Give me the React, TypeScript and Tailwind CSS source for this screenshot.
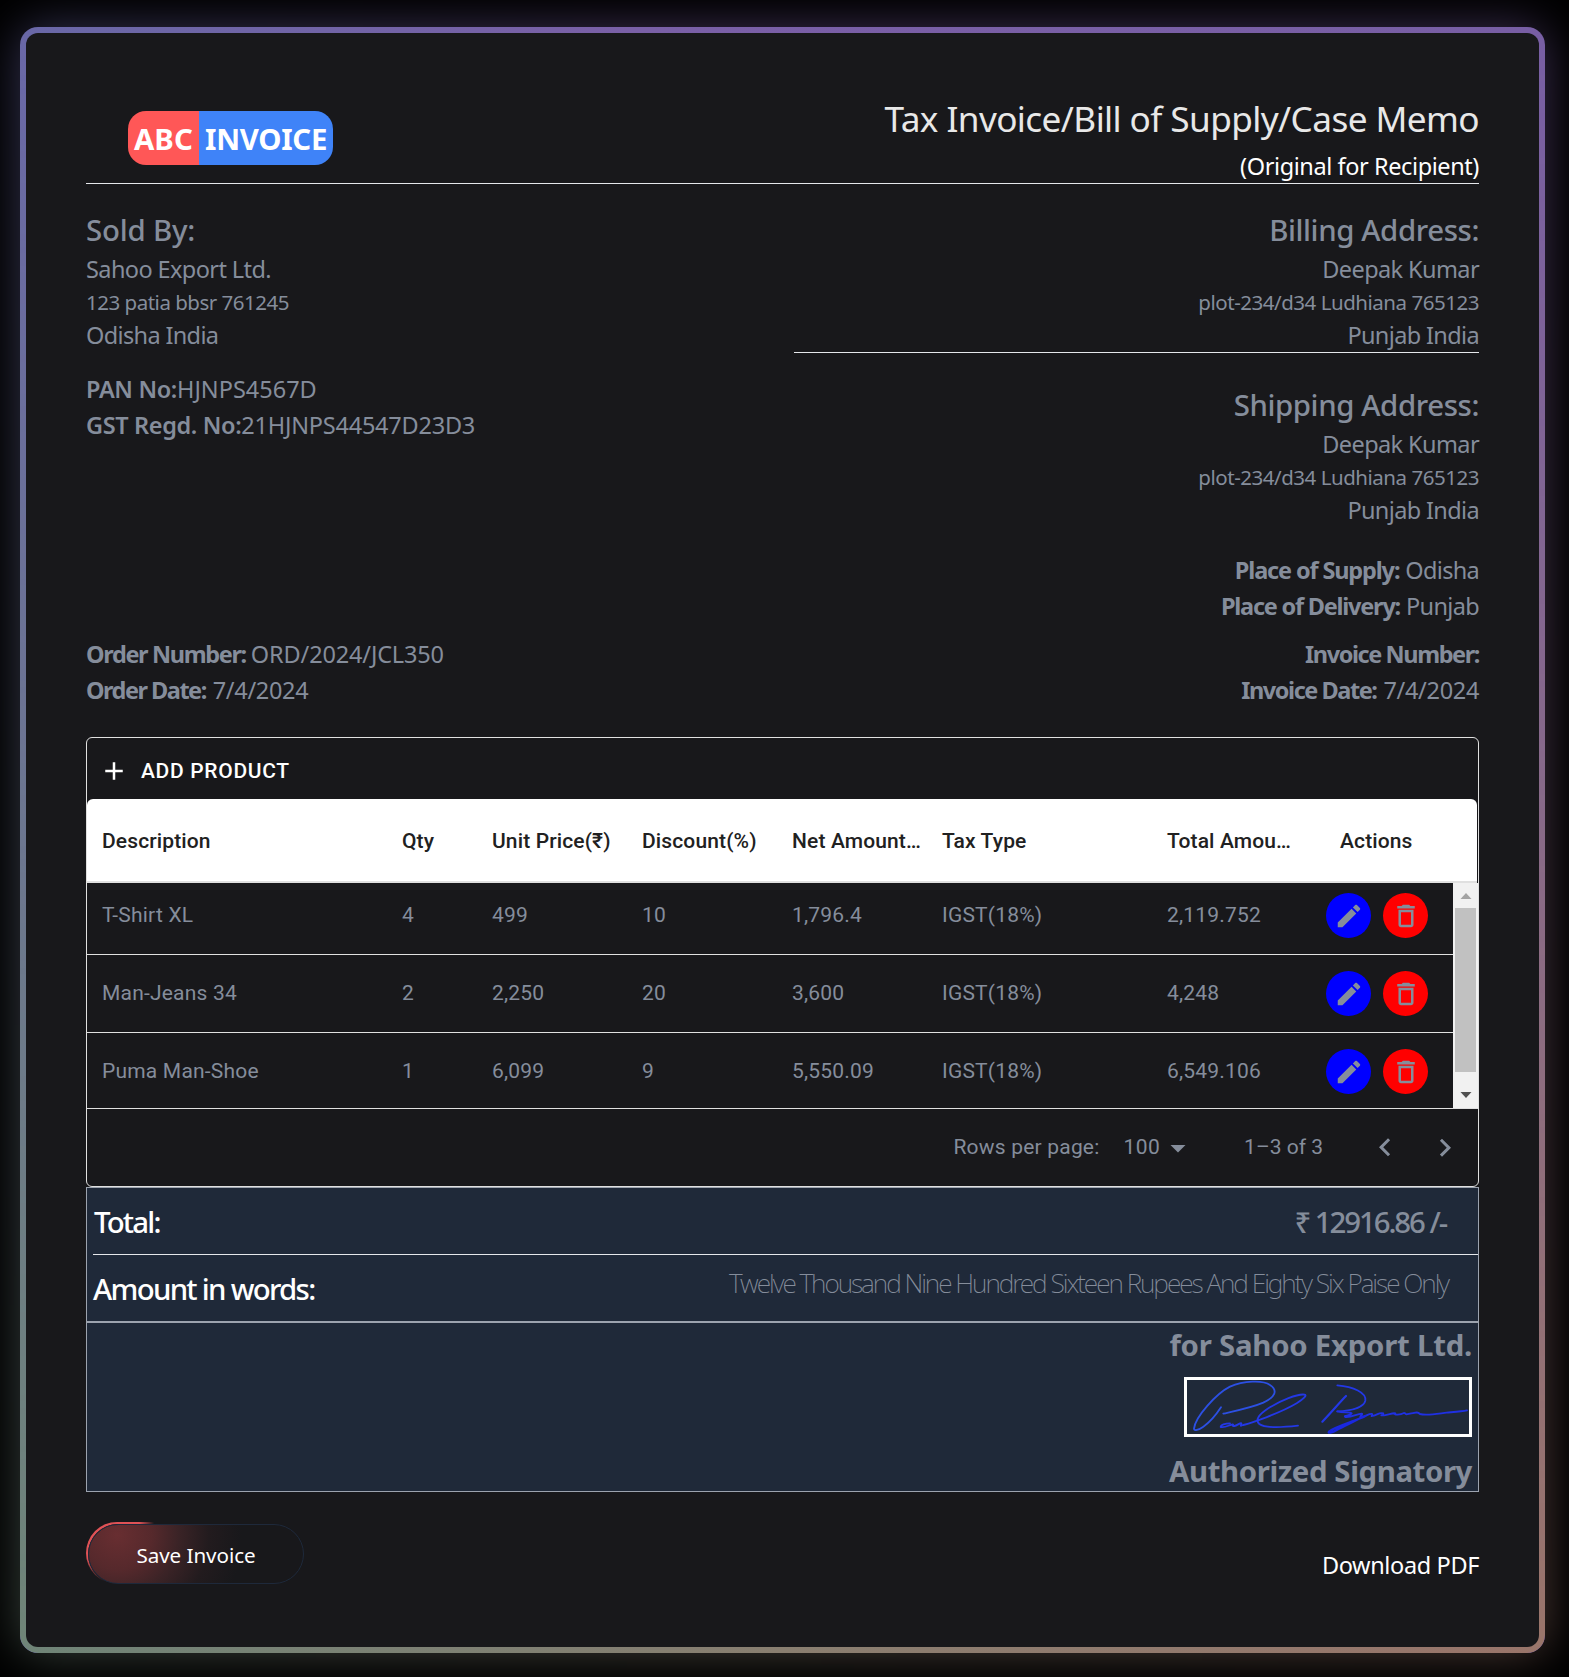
import type { ReactNode } from "react";

const products = [
  { name: "T-Shirt XL", qty: "4", price: "499", discount: "10", net: "1,796.4", tax: "IGST(18%)", total: "2,119.752" },
  { name: "Man-Jeans 34", qty: "2", price: "2,250", discount: "20", net: "3,600", tax: "IGST(18%)", total: "4,248" },
  { name: "Puma Man-Shoe", qty: "1", price: "6,099", discount: "9", net: "5,550.09", tax: "IGST(18%)", total: "6,549.106" },
];

const columns = "grid grid-cols-[300px_90px_150px_150px_150px_225px_150px_1fr] items-center";

function Icon({ d, className }: { d: string; className: string }) {
  return (
    <svg viewBox="0 0 24 24" fill="currentColor" className={className}>
      <path d={d} />
    </svg>
  );
}

function GradientFill() {
  return (
    <>
      <div className="absolute inset-0 rounded-[18px] bg-[linear-gradient(to_right,#6a68a8,#7a60a8_40%,#785fa5)]" />
      <div className="absolute inset-0 rounded-[18px] bg-[linear-gradient(to_right,#6f8577,#8a7f70_50%,#9a756a)] [mask-image:linear-gradient(to_bottom,transparent,black)]" />
    </>
  );
}

function Address({ title }: { title: string }) {
  return (
    <>
      <h2 className="pt-[2px] text-[29.4px] leading-[42px] font-medium tracking-[-0.4px]">{title}</h2>
      <p className="text-[23.5px] leading-[36px] tracking-[-0.6px]">Deepak Kumar</p>
      <p className="text-[20.5px] leading-[30px] tracking-[-0.47px]">plot-234/d34 Ludhiana 765123</p>
      <p className="h-[35px] text-[23.5px] leading-[37px] tracking-[-0.64px]">Punjab India</p>
    </>
  );
}

function Cell({ children }: { children: ReactNode }) {
  return <div className="truncate pl-[15px]">{children}</div>;
}

function Signature() {
  return (
    <svg viewBox="21 30 846 162" className="h-[54px] w-[282px]" fill="none" stroke="#2338e6" strokeWidth="5.5" strokeLinecap="round" strokeLinejoin="round">
      <path stroke="#2c50e4" d="M123 112C108 135 88 158 70 170C56 180 42 184 42 176C46 140 110 70 150 50C190 32 250 30 270 45C295 62 285 82 250 98C215 113 170 122 130 131" />
      <path d="M150 160C135 160 122 165 122 171C135 174 148 165 158 163C162 163 155 170 163 168C172 166 180 158 184 160C186 166 176 170 190 165C215 158 300 130 350 100C370 87 382 76 374 74C355 70 300 92 265 115C235 135 225 150 238 162C255 175 310 172 354 167" />
      <path d="M472 46C520 50 560 68 556 92C552 112 515 122 472 124" />
      <path strokeWidth="6.5" d="M498 78C480 96 455 126 427 155" />
      <path stroke="#1f30e4" d="M472 124C490 130 510 124 515 130C512 138 488 136 496 141C515 143 530 132 545 131C552 133 532 142 546 141C560 139 566 130 576 132C582 136 566 140 582 137C592 134 600 126 610 130C612 136 594 137 612 136C628 134 636 128 646 130C640 137 662 134 672 129C684 131 668 135 690 131C706 128 712 124 720 132C740 138 780 130 800 128C820 126 845 124 861 121" />
      <path stroke="#1a28e0" strokeWidth="6.5" d="M556 138C530 152 470 168 448 184C440 192 458 188 470 180C500 164 530 152 548 140M470 174C490 164 515 154 530 150" />
    </svg>
  );
}

export default function App() {
  return (
    <div className="h-[1677px] w-[1569px] overflow-hidden bg-black pt-[27px] pl-[20px] font-['Noto_Sans','Open_Sans',sans-serif] text-[#858d9b]">
      <div className="relative h-[1626px] w-[1525px] p-[6px]">
        <div className="absolute inset-0 opacity-50 blur-xl">
          <GradientFill />
        </div>
        <GradientFill />

        <main className="relative h-full rounded-[12px] bg-[#18181b] px-[60px] pt-[58px]">
          <header className="flex h-[93px] justify-between border-b border-gray-200">
            <div className="mt-[20px] ml-[42px] flex h-[54px] w-[205px] overflow-hidden rounded-[18px] text-[29.4px] leading-[57px] font-bold text-white">
              <span className="w-[71px] bg-[#ff5757] pl-[6px]">ABC</span>
              <span className="flex-1 bg-[#3f83f8] pl-[6px] tracking-[-0.3px]">INVOICE</span>
            </div>
            <div className="text-right">
              <h1 className="text-[35.2px] leading-[55px] tracking-[-0.6px] text-[#e8e8e8]">Tax Invoice/Bill of Supply/Case Memo</h1>
              <p className="pt-[3px] text-[23.5px] leading-[34px] tracking-[-0.41px] text-white">(Original for Recipient)</p>
            </div>
          </header>

          <section className="flex justify-between pt-[23px]">
            <div>
              <h2 className="pt-[2px] text-[29.4px] leading-[42px] font-medium tracking-[-0.2px]">Sold By:</h2>
              <p className="text-[23.5px] leading-[36px] tracking-[-0.6px]">Sahoo Export Ltd.</p>
              <p className="text-[20.5px] leading-[30px] tracking-[-0.49px]">123 patia bbsr 761245</p>
              <p className="text-[23.5px] leading-[36px] tracking-[-0.65px]">Odisha India</p>
              <div className="pt-[18px] text-[23.5px] leading-[36px]">
                <p>
                  <b className="font-semibold tracking-[-0.35px]">PAN No:</b>
                  <span>HJNPS4567D</span>
                </p>
                <p>
                  <b className="font-semibold tracking-[-0.36px]">GST Regd. No:</b>
                  <span className="tracking-[-0.22px]">21HJNPS44547D23D3</span>
                </p>
              </div>
            </div>
            <div className="w-[685px] text-right">
              <div className="border-b border-gray-200">
                <Address title="Billing Address:" />
              </div>
              <div className="pt-[29px]">
                <Address title="Shipping Address:" />
              </div>
              <div className="pt-[25px] text-[23.5px] leading-[36px]">
                <p>
                  <b className="mr-[6px] font-bold tracking-[-1.14px]">Place of Supply:</b>
                  <span className="tracking-[-0.7px]">Odisha</span>
                </p>
                <p>
                  <b className="mr-[6px] font-bold tracking-[-1.22px]">Place of Delivery:</b>
                  <span className="tracking-[-0.66px]">Punjab</span>
                </p>
              </div>
            </div>
          </section>

          <section className="flex justify-between pt-[12px] text-[23.5px] leading-[36px]">
            <div>
              <p>
                <b className="mr-[5px] font-bold tracking-[-1.35px]">Order Number:</b>
                <span className="tracking-[-0.15px]">ORD/2024/JCL350</span>
              </p>
              <p>
                <b className="mr-[7px] font-bold tracking-[-1.5px]">Order Date:</b>
                <span className="tracking-[-0.32px]">7/4/2024</span>
              </p>
            </div>
            <div className="text-right">
              <p>
                <b className="font-bold tracking-[-1.41px]">Invoice Number:</b>
              </p>
              <p>
                <b className="mr-[7px] font-bold tracking-[-1.45px]">Invoice Date:</b>
                <span className="tracking-[-0.32px]">7/4/2024</span>
              </p>
            </div>
          </section>

          <section className="mt-[29px] h-[450px] overflow-hidden rounded-[6px] border border-[#e0e0e0] font-[Roboto,'Noto_Sans',sans-serif] text-[21px] leading-[30px]">
            <div className="flex h-[61px] items-center gap-[12px] pt-[4px] pl-[12px] font-medium text-white">
              <Icon d="M19 13h-6v6h-2v-6H5v-2h6V5h2v6h6v2z" className="size-[30px]" />
              <span className="tracking-[0.68px]">ADD PRODUCT</span>
            </div>
            <div className={`${columns} mr-px h-[84px] rounded-t-[6px] border-b-2 border-[#e0e0e0] bg-white pt-[2px] font-medium tracking-[0.13px] text-[#212121]`}>
              <Cell>Description</Cell>
              <Cell>Qty</Cell>
              <Cell>Unit Price(₹)</Cell>
              <Cell>Discount(%)</Cell>
              <Cell>Net Amount…</Cell>
              <Cell>Tax Type</Cell>
              <Cell>Total Amou…</Cell>
              <div className="pl-[38px]">Actions</div>
            </div>

            <div className="flex h-[225px] overflow-hidden">
              <div className="-mt-[6px] flex-1">
                {products.map((p) => (
                  <div key={p.name} className={`${columns} h-[78px] border-b border-[#e0e0e0] tracking-[0.2px] *:not-last:pb-[2px]`}>
                    <Cell>{p.name}</Cell>
                    <Cell>{p.qty}</Cell>
                    <Cell>{p.price}</Cell>
                    <Cell>{p.discount}</Cell>
                    <Cell>{p.net}</Cell>
                    <Cell>{p.tax}</Cell>
                    <Cell>{p.total}</Cell>
                    <div className="flex gap-[12px] pl-[24px]">
                      <button className="flex size-[45px] items-center justify-center rounded-full bg-[#0000ff]">
                        <Icon d="M3 17.25V21h3.75L17.81 9.94l-3.75-3.75L3 17.25zM20.71 7.04c.39-.39.39-1.02 0-1.41l-2.34-2.34c-.39-.39-1.02-.39-1.41 0l-1.83 1.83 3.75 3.75 1.83-1.83z" className="size-[30px]" />
                      </button>
                      <button className="flex size-[45px] items-center justify-center rounded-full bg-[#ff0000]">
                        <Icon d="M6 19c0 1.1.9 2 2 2h8c1.1 0 2-.9 2-2V7H6v12zM8 9h8v10H8V9zm7.5-5l-1-1h-5l-1 1H5v2h14V4h-3.5z" className="size-[30px]" />
                      </button>
                    </div>
                  </div>
                ))}
              </div>
              <div className="flex h-[225px] w-[25px] flex-col items-center bg-[#f1f1f1]">
                <Icon d="M6.5 15l5.5-6 5.5 6z" className="mt-px size-[24px] text-[#a3a3a3]" />
                <div className="h-[164px] w-[21px] bg-[#c1c1c1]" />
                <Icon d="M6.5 9l5.5 6 5.5-6z" className="mt-[11px] size-[24px] text-[#505050]" />
              </div>
            </div>

            <div className="flex h-[78px] items-center justify-end border-t border-[#e0e0e0] pr-[15px] tracking-[0.2px]">
              <span className="mr-[24px] pb-[2px]">Rows per page:</span>
              <span className="pb-[2px] tracking-[0.4px]">100</span>
              <Icon d="M7 10l5 5 5-5z" className="size-[36px]" />
              <span className="mr-[44px] ml-[48px] pb-[2px] tracking-[0px]">1–3 of 3</span>
              <Icon d="M15.41 16.09l-4.58-4.59 4.58-4.59L14 5.5l-6 6 6 6z" className="mr-[24px] size-[36px]" />
              <Icon d="M8.59 16.34l4.58-4.59-4.58-4.59L10 5.75l6 6-6 6z" className="size-[36px]" />
            </div>
          </section>

          <section className="h-[135px] border border-[#9ca3af] bg-[#1f2939] pl-[6px] font-medium">
            <div className="flex h-[67px] items-center justify-between border-b border-gray-200 pt-px pr-[32px] text-[29.4px] leading-[44px]">
              <span className="pl-px tracking-[-1.8px] text-white">Total:</span>
              <span className="tracking-[-2.07px]">₹ 12916.86 /-</span>
            </div>
            <div className="flex h-[66px] items-center justify-between pt-px pr-[30px]">
              <span className="text-[29.4px] leading-[44px] tracking-[-1.71px] text-white">Amount in words:</span>
              <span className="pb-[12px] text-[26.4px] leading-[40px] font-extralight tracking-[-2.05px]">
                Twelve Thousand Nine Hundred Sixteen Rupees And Eighty Six Paise Only
              </span>
            </div>
          </section>

          <section className="flex h-[170px] flex-col items-end border border-[#9ca3af] bg-[#1f2939] pr-[6px] text-[29.4px] font-bold">
            <p className="h-[43px] leading-[45px] tracking-[-0.25px]">for Sahoo Export Ltd.</p>
            <div className="mt-[11px] h-[60px] w-[288px] shrink-0 border-3 border-white">
              <Signature />
            </div>
            <p className="mt-[13px] leading-[43px] tracking-[-0.41px]">Authorized Signatory</p>
          </section>

          <footer className="mt-[30px] flex items-start justify-between">
            <button className="h-[62px] w-[218px] rounded-full bg-[radial-gradient(circle_at_24px_14px,#e05256_0,#e05256_32px,transparent_46px)] pt-[2px] pl-[2px]">
              <span className="block h-[60px] w-[216px] rounded-full bg-[#18181b]">
                <span className="flex h-[60px] w-[216px] items-center justify-center rounded-full border border-[#1e293b] bg-[radial-gradient(circle_at_28px_10px,#682e31_0,#56292c_35px,#3a2326_62px,#221b1e_92px,transparent_125px)] pt-[2px] text-[20.6px] leading-[30px] tracking-[-0.05px] text-white">
                  Save Invoice
                </span>
              </span>
            </button>
            <a className="mt-[25px] text-[23.5px] leading-[36px] tracking-[-0.37px] text-white">Download PDF</a>
          </footer>
        </main>
      </div>
    </div>
  );
}
